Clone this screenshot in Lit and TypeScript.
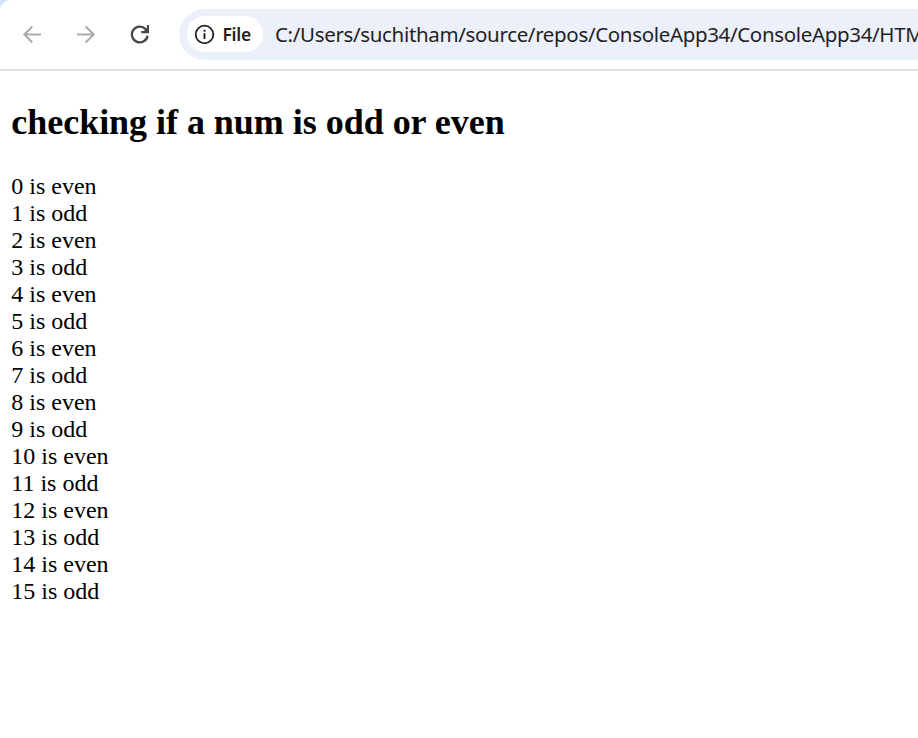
import { LitElement, html, css } from "lit";
import { customElement, property } from "lit/decorators.js";

@customElement("browser-toolbar")
class BrowserToolbar extends LitElement {
  @property() address = "";

  static styles = css`
    :host { display: block; background: #d3e3fd; }
    .bar {
      box-sizing: border-box;
      display: flex;
      align-items: center;
      height: 71px;
      padding: 0 0 1px 20px;
      background: #fff;
      border-bottom: 2px solid #e1e1e1;
      border-top-left-radius: 11px;
      overflow: hidden;
    }
    .nav { display: flex; gap: 30px; flex: none; }
    .nav svg { display: block; width: 24px; height: 24px; fill: none; stroke-width: 2; }
    .dim { stroke: #ababab; }
    .dark { stroke: #474747; }
    .nav .dark { stroke-width: 2.3; }
    .head { fill: #474747; stroke: none; }
    .omnibox {
      box-sizing: border-box;
      display: flex;
      align-items: center;
      flex: 1;
      min-width: 0;
      height: 51px;
      margin-left: 27px;
      padding-left: 8px;
      background: #ecf0fa;
      border-radius: 26px 0 0 26px;
      overflow: hidden;
    }
    .chip {
      box-sizing: border-box;
      display: flex;
      align-items: center;
      flex: none;
      width: 76px;
      height: 36px;
      padding-left: 7px;
      background: #fff;
      border-radius: 18px;
      font: 600 17.5px/36px "Noto Sans", sans-serif;
      letter-spacing: -0.3px;
      color: #1f1f1f;
    }
    .chip svg { width: 21px; height: 21px; flex: none; margin-right: 7.5px; }
    .url {
      margin-left: 12px;
      white-space: nowrap;
      font: 20.5px/36px "Noto Sans", sans-serif;
      letter-spacing: -0.34px;
      color: #1f1f1f;
    }
  `;

  render() {
    return html`
      <div class="bar">
        <div class="nav">
          <svg class="dim" viewBox="0 0 24 24"><path d="M21 12.5H4.3M12.3 4.5L4.3 12.5L12.3 20.5" /></svg>
          <svg class="dim" viewBox="0 0 24 24"><path d="M3 12.5H19.7M11.7 4.5L19.7 12.5L11.7 20.5" /></svg>
          <svg class="dark" viewBox="0 0 24 24">
            <path d="M19.6 13.7A7.9 7.9 0 1 1 17.4 6.9L18.5 8" />
            <path d="M20 3.1V10.1H13.2" stroke-width="2.1" />
            <path class="head" d="M20 5L15 10H20Z" />
          </svg>
        </div>
        <div class="omnibox">
          <div class="chip">
            <svg viewBox="0 0 21 21" fill="none" stroke="#1f1f1f">
              <circle cx="10.5" cy="10.5" r="8.8" stroke-width="1.8" />
              <path d="M10.5 9.3V15M10.5 5.8V7.7" stroke-width="1.9" />
            </svg>
            <span>File</span>
          </div>
          <span class="url">${this.address}</span>
        </div>
      </div>
    `;
  }
}

@customElement("app-root")
class AppRoot extends LitElement {
  static styles = css`
    :host { display: block; height: 738px; background: #fff; overflow: hidden; }
    .page {
      padding: 0 12px 0 11.3px;
      color: #000;
      font: 24px/27px "Liberation Serif", serif;
    }
    .title { margin: 0; padding: 31px 0 30px; font-size: 36px; line-height: 41px; letter-spacing: -0.03px; }
  `;

  render() {
    const numbers = Array.from({ length: 16 }, (_, n) => n);
    return html`
      <browser-toolbar
        address="C:/Users/suchitham/source/repos/ConsoleApp34/ConsoleApp34/HTMLPage1.html"
      ></browser-toolbar>
      <main class="page">
        <h2 class="title">checking if a num is odd or even</h2>
        ${numbers.map((n) => html`<div>${n} is ${n % 2 ? "odd" : "even"}</div>`)}
      </main>
    `;
  }
}
